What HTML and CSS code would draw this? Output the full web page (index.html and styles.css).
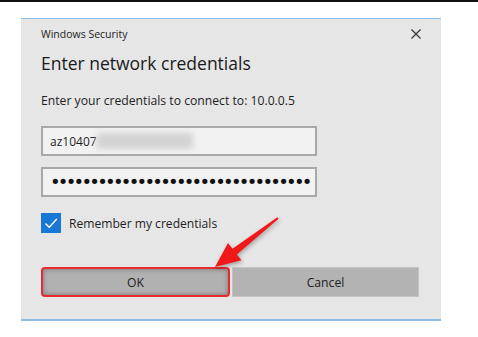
FILE: index.html
```html
<!doctype html>
<html lang="en">

<head>
    <meta charset="utf-8">
    <title>Windows Security</title>
    <meta name="viewport" content="width=device-width, initial-scale=1">
    <link rel="stylesheet" href="styles.css">
</head>

<body>
    <div class="screen">
        <div class="dialog">
            <div class="titlebar">
                <span class="title">Windows Security</span>
                <svg class="close" width="10" height="10" viewBox="0 0 10 10">
                    <path d="M0.5 0.5 L9.5 9.5 M9.5 0.5 L0.5 9.5" stroke="#333" stroke-width="1.2" fill="none"/>
                </svg>
            </div>
            <h1 class="heading">Enter network credentials</h1>
            <p class="prompt">Enter your credentials to connect to: 10.0.0.5</p>
            <div class="field"><span>az10407</span><span class="smudge"></span></div>
            <div class="field"><span class="dots">•••••••••••••••••••••••••••••••••</span></div>
            <div class="remember">
                <span class="check">
                    <svg width="20" height="20" viewBox="0 0 20 20">
                        <path d="M4.5 10.5 L8.2 14.2 L15.8 6" stroke="#fff" stroke-width="1.4" fill="none"/>
                    </svg>
                </span>
                <span>Remember my credentials</span>
            </div>
            <div class="buttons">
                <div class="btn btn-ok">OK</div>
                <div class="btn">Cancel</div>
            </div>
        </div>
        <!-- annotation arrow drawn over the dialog -->
        <svg class="arrow" width="80" height="70" viewBox="205 205 80 70">
            <polygon points="277.4,215.2 278.6,216.8 236.8,252.4 241.5,258.3 215,265 228,240.9 232.5,246.8" fill="#f01818"/>
        </svg>
    </div>
</body>

</html>
```

FILE: styles.css
```css
html,
body {
    margin: 0;
    padding: 0;
    background: #fff;
    font-family: 'Open Sans', sans-serif;
    color: #1e1e1e;
}

.screen {
    position: relative;
    height: 337px;
    border-top: 2px solid #111;
    padding-top: 16px;
    box-sizing: border-box;
}

.dialog {
    width: 420px;
    margin-left: 21px;
    box-sizing: border-box;
    background: #e6e6e6;
    border-top: 1px solid #8cbde8;
    border-bottom: 2px solid #8cbde8;
    padding: 0 22px 22px 20px;
}

.titlebar {
    display: flex;
    justify-content: space-between;
    align-items: center;
    height: 16px;
    margin-top: 7px;
}

.title {
    font-size: 10.5px;
    line-height: 16px;
    color: #222;
}

.close {
    margin-right: -2px;
}

.heading {
    margin: 8px 0 0;
    font-size: 17.5px;
    line-height: 26px;
    font-weight: normal;
    color: #1a1a1a;
}

.prompt {
    margin: 17px 0 0;
    font-size: 12.2px;
    line-height: 16px;
}

.field {
    width: 276px;
    height: 30px;
    margin-top: 17px;
    box-sizing: border-box;
    border: 2px solid #a8a8a8;
    background: #f2f2f2;
    display: flex;
    align-items: center;
    padding-left: 7px;
    font-size: 12px;
}

.field + .field {
    margin-top: 11px;
}

.smudge {
    display: inline-block;
    width: 96px;
    height: 16px;
    background: #d2d2d2;
    filter: blur(3px);
}

.dots {
    font-family: 'DejaVu Sans', sans-serif;
    font-size: 18px;
    letter-spacing: -2.75px;
    line-height: 20px;
    color: #111;
}

.remember {
    display: flex;
    align-items: center;
    gap: 8px;
    margin-top: 16px;
    height: 20px;
    font-size: 12.1px;
}

.check {
    width: 20px;
    height: 20px;
    background: #1977d6;
    display: block;
}

.check svg {
    display: block;
}

.buttons {
    display: flex;
    gap: 2px;
    margin-top: 34px;
}

.btn {
    flex: 1;
    height: 30px;
    box-sizing: border-box;
    background: #b3b3b3;
    border: 1px solid #c4c4c4;
    display: flex;
    align-items: center;
    justify-content: center;
    font-size: 12.2px;
    color: #222;
}

.btn-ok {
    border: 2px solid #ea2a2f;
    border-radius: 4px;
    background: #b1b1b1;
    box-shadow: inset 0 0 5px rgba(0, 0, 0, 0.35);
}

.arrow {
    position: absolute;
    left: 205px;
    top: 205px;
    filter: drop-shadow(1px 2px 2px rgba(0, 0, 0, 0.3));
}
```
